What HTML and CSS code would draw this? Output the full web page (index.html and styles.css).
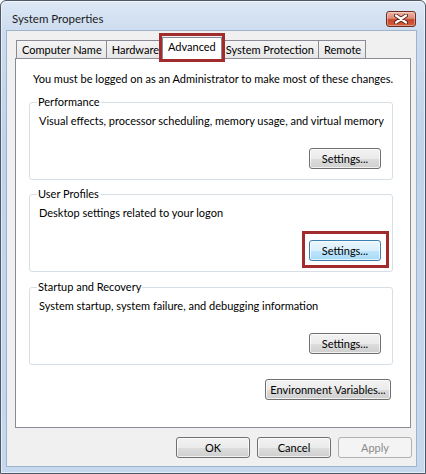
FILE: index.html
```html
<!DOCTYPE html>
<html lang="en">
<head>
<meta charset="utf-8">
<title>System Properties</title>
<link rel="stylesheet" href="styles.css">
</head>
<body>
<div class="window">
  <div class="titlebar">
    <span class="title">System Properties</span>
    <button class="close" aria-label="Close">
      <svg width="14" height="10" viewBox="0 0 14 10">
        <path d="M2 1.5 L12 8.5 M12 1.5 L2 8.5" stroke="#5b2015" stroke-width="4" stroke-linecap="round"/>
        <path d="M2 1.5 L12 8.5 M12 1.5 L2 8.5" stroke="#ffffff" stroke-width="2.2" stroke-linecap="round"/>
      </svg>
    </button>
  </div>
  <div class="client">
    <div class="tabs">
      <div class="tab">Computer Name</div>
      <div class="tab">Hardware</div>
      <div class="tab selected">Advanced<span class="mark tab-mark"></span></div>
      <div class="tab">System Protection</div>
      <div class="tab">Remote</div>
    </div>
    <div class="panel">
      <p class="note">You must be logged on as an Administrator to make most of these changes.</p>
      <fieldset class="group g1">
        <legend>Performance</legend>
        <p>Visual effects, processor scheduling, memory usage, and virtual memory</p>
        <div class="actions"><button class="btn">Settings...</button></div>
      </fieldset>
      <fieldset class="group g2">
        <legend>User Profiles</legend>
        <p>Desktop settings related to your logon</p>
        <div class="actions">
          <span class="marked"><button class="btn hot">Settings...</button><span class="mark btn-mark"></span></span>
        </div>
      </fieldset>
      <fieldset class="group g3">
        <legend>Startup and Recovery</legend>
        <p>System startup, system failure, and debugging information</p>
        <div class="actions"><button class="btn">Settings...</button></div>
      </fieldset>
      <div class="env"><button class="btn env-btn">Environment Variables...</button></div>
    </div>
    <div class="footer">
      <button class="btn dlg">OK</button>
      <button class="btn dlg">Cancel</button>
      <button class="btn dlg" disabled>Apply</button>
    </div>
  </div>
</div>
</body>
</html>
```
FILE: styles.css
```css
* { box-sizing: border-box; }
html, body { margin: 0; padding: 0; }
body {
  width: 426px;
  height: 474px;
  font-family: Lato, "Liberation Sans", sans-serif;
  font-size: 11px;
  color: #000;
  background: #ffffff;
}
.window {
  width: 426px;
  height: 474px;
  display: flex;
  flex-direction: column;
  border: 1px solid #4f5866;
  border-radius: 6px 6px 0 0;
  background: linear-gradient(to bottom, #dde8f5 0, #cddcef 30px, #bfd3eb 140px, #c6d8ee 100%);
  box-shadow: inset 0 0 0 1px rgba(255,255,255,0.55);
  padding: 0 9px 7px 6px;
}
.titlebar {
  height: 30px;
  flex: none;
  display: flex;
  align-items: flex-start;
  justify-content: space-between;
  padding-left: 5px;
}
.title {
  margin-top: 10px;
  line-height: 16px;
  font-size: 11.5px;
  color: #1b1b1b;
}
.close {
  margin-top: 10px;
  width: 30px;
  height: 16px;
  padding: 0;
  border: 1px solid #6e2c20;
  border-radius: 3px;
  background: linear-gradient(to bottom, #ecb3a4 0%, #de8b76 45%, #c8442b 55%, #d2603c 100%);
  box-shadow: inset 0 0 0 1px rgba(255,255,255,0.35);
  display: flex;
  align-items: center;
  justify-content: center;
}
.close svg { display: block; }
.client {
  flex: 1;
  display: flex;
  flex-direction: column;
  background: #f0f0f0;
  box-shadow: 0 0 0 1px #9fb3cb;
  padding: 9px 0 8px 0;
}
.tabs {
  position: relative;
  z-index: 1;
  display: flex;
  align-items: flex-start;
  margin-left: 9px;
  flex: none;
}
.tab {
  position: relative;
  border: 1px solid #898c95;
  border-bottom: none;
  background: linear-gradient(to bottom, #f4f4f4, #e6e6e6);
  line-height: 17px;
  padding: 0 4px 0 5px;
  white-space: nowrap;
}
.tab + .tab { margin-left: -1px; }
.tab.selected {
  background: #ffffff;
  margin: -3px -2px -1px -2px;
  padding: 0 5px 4px 5px;
  z-index: 2;
}
.tab.selected + .tab { margin-left: 0; }
.mark {
  position: absolute;
  border: 3px solid #a22c2c;
  pointer-events: none;
  z-index: 3;
}
.tab-mark { left: -4px; right: -4px; top: -5px; bottom: -3px; }
.panel {
  flex: 1;
  margin: 0 5px 0 8px;
  border: 1px solid #898c95;
  background: #ffffff;
  padding: 12px 17px 0 13px;
  display: flex;
  flex-direction: column;
}
.note {
  margin: 0 0 0 4px;
  line-height: 16px;
  white-space: nowrap;
}
.group {
  margin: 0;
  min-width: 0;
  border: 1px solid #d5dfe5;
  border-radius: 3px;
  padding: 3px 11px 10px 9px;
}
.g1 { margin-top: 7px; }
.g2 { margin-top: 6px; }
.g3 { margin-top: 7px; }
.group legend {
  padding: 0 1px;
  margin-left: -2px;
  line-height: 16px;
}
.group p {
  margin: 0;
  line-height: 16px;
  white-space: nowrap;
}
.actions {
  display: flex;
  justify-content: flex-end;
  margin-top: 19px;
}
.marked {
  position: relative;
  display: inline-block;
  line-height: 0;
}
.btn-mark { left: -7px; right: -8px; top: -9px; bottom: -7px; }
.btn {
  height: 21px;
  width: 72px;
  padding: 0;
  font: inherit;
  font-size: 11px;
  line-height: 19px;
  color: #000;
  border: 1px solid #707070;
  border-radius: 3px;
  background: linear-gradient(to bottom, #f2f2f2 0%, #ebebeb 50%, #dddddd 51%, #cfcfcf 100%);
  box-shadow: inset 0 0 0 1px rgba(255,255,255,0.7);
  white-space: nowrap;
}
.btn.hot {
  border-color: #3c7fb1;
  background: linear-gradient(to bottom, #eaf6fd 0%, #d9f0fc 50%, #bee6fd 51%, #a7d9f5 100%);
}
.env {
  display: flex;
  justify-content: flex-end;
  margin-top: 14px;
  margin-right: 2px;
}
.env-btn { width: 126px; }
.footer {
  flex: none;
  display: flex;
  justify-content: flex-end;
  gap: 7px;
  margin-top: 9px;
  padding-right: 4px;
}
.btn.dlg { width: 74px; }
.btn:disabled {
  color: #8a8a8a;
  border-color: #adb2b5;
  background: #f4f4f4;
  box-shadow: none;
}
```
